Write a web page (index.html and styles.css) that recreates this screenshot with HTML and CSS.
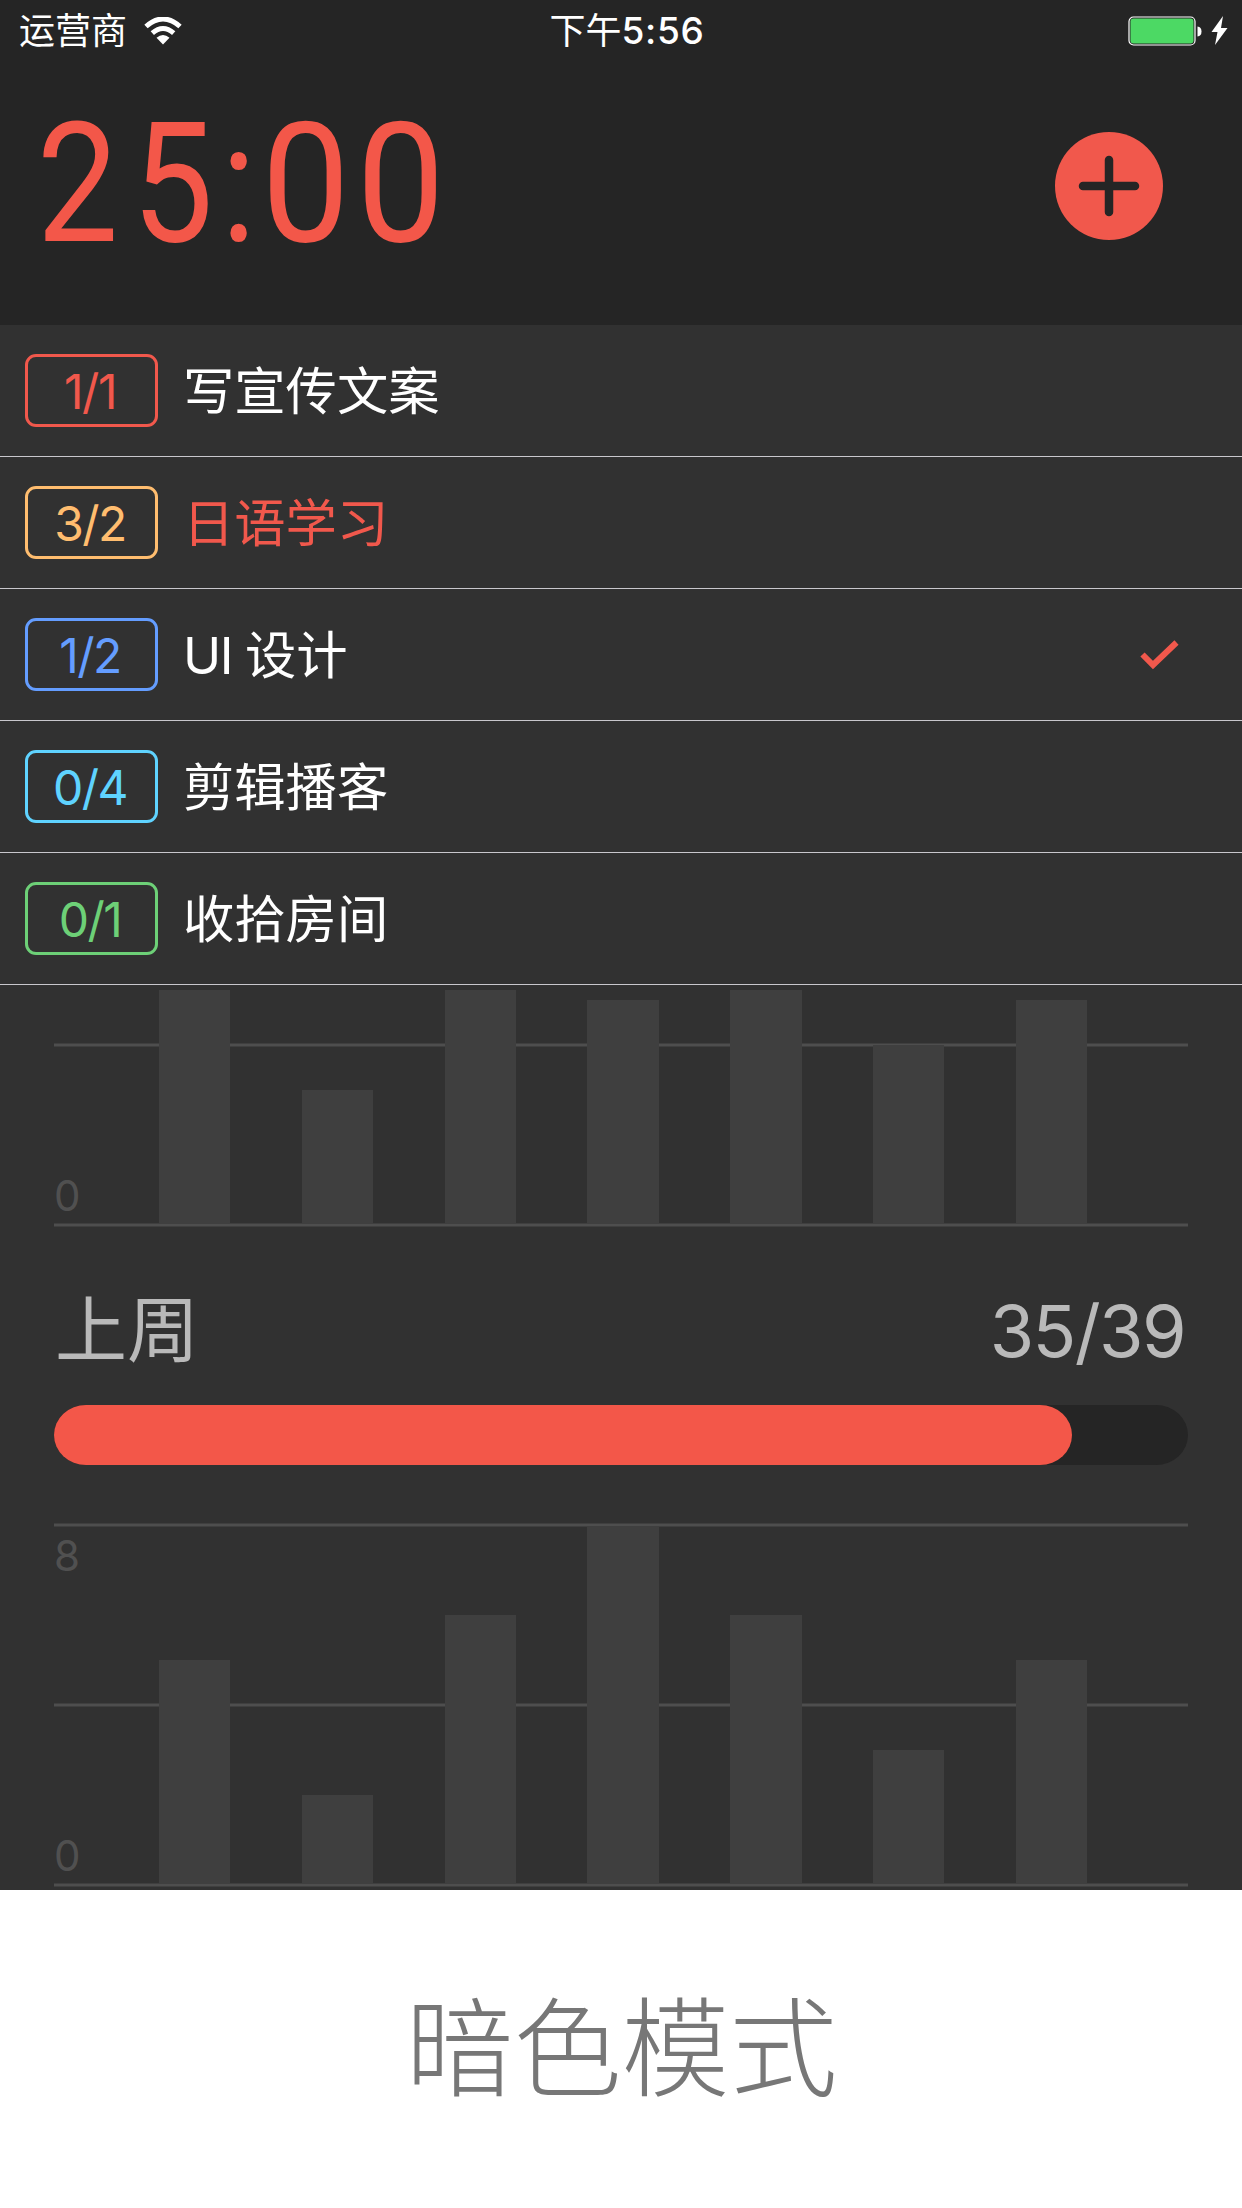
FILE: index.html
```html
<!DOCTYPE html>
<html lang="zh-CN">
<head>
<meta charset="utf-8">
<title>25:00</title>
<link rel="stylesheet" href="styles.css">
</head>
<body>
<div class="phone">
  <div class="status">
    <div class="status-left">
      <span>运营商</span>
      <svg class="wifi" width="38" height="28" viewBox="0 0 38 28" fill="none" stroke="#fff" stroke-width="5"><path d="M2 9.5Q19-5.5 36 9.5M8.3 16.2Q19 6.8 29.700 16.200"/><path d="M12.500 20.800Q19 15 25.500 20.800L19 27.500Z" fill="#fff" stroke="none"/></svg>
    </div>
    <div class="status-time">下午<b>5:56</b></div>
    <div class="status-right">
      <svg width="104" height="30" viewBox="0 0 104 30"><rect x="1" y="1" width="66" height="28" rx="4.500" fill="#252525" stroke="#fff" stroke-width="1.200"/><rect x="2.500" y="2.500" width="63" height="25" rx="3" fill="#4cd964"/><path d="M69.500 10.500q4 .5 4 5t-4 5z" fill="#fff"/><path d="M95 0 83.500 16h6L87 29 99.500 12h-6.500z" fill="#fff"/></svg>
    </div>
  </div>
  <header class="timer">
    <div class="clock"><span>2</span><span>5</span><span class="colon">:</span><span class="zero">0</span><span class="zero">0</span></div>
    <svg class="add" width="108" height="108" viewBox="0 0 108 108"><circle cx="54" cy="54" r="54" fill="#f1584c"/><path d="M54 28v52M28 54h52" stroke="#252525" stroke-width="8.500" stroke-linecap="round"/></svg>
  </header>
  <ul class="tasks">
    <li class="task red"><span class="count">1/1</span><span class="name">写宣传文案</span></li>
    <li class="task orange active"><span class="count">3/2</span><span class="name">日语学习</span></li>
    <li class="task blue"><span class="count">1/2</span><span class="name"><span class="latin">UI </span>设计</span><svg class="check" width="40" height="32" viewBox="0 0 40 32" fill="none" stroke="#f1584c" stroke-width="6"><path d="M2.500 15.500 13 26 36.500 3.500"/></svg></li>
    <li class="task cyan"><span class="count">0/4</span><span class="name">剪辑播客</span></li>
    <li class="task green"><span class="count">0/1</span><span class="name">收拾房间</span></li>
  </ul>
  <section class="stats">
    <div class="chart clipped">
      <div class="grid"><i></i><i class="edge"></i></div>
      <div class="bars"><i style="height:235px"></i><i style="height:135px"></i><i style="height:235px"></i><i style="height:225px"></i><i style="height:235px"></i><i style="height:180px"></i><i style="height:225px"></i></div>
      <span class="axis min">0</span>
    </div>
    <div class="week"><span class="week-name">上周</span><span class="week-count">35/39</span></div>
    <div class="progress"><div class="fill" style="width:1018px"></div></div>
    <div class="chart full">
      <div class="grid"><i class="edge"></i><i></i><i class="edge"></i></div>
      <div class="bars"><i style="height:225px"></i><i style="height:90px"></i><i style="height:270px"></i><i style="height:360px"></i><i style="height:270px"></i><i style="height:135px"></i><i style="height:225px"></i></div>
      <span class="axis max">8</span>
      <span class="axis min">0</span>
    </div>
  </section>
  <footer class="caption">暗色模式</footer>
</div>
</body>
</html>
```
FILE: styles.css
```css
* { box-sizing: border-box; }
body {
  margin: 0;
  background: #fff;
  font-family: Inter, "Noto Sans CJK SC", sans-serif;
}
svg { display: block; flex: none; }
.phone { width: 1242px; height: 2208px; display: flex; flex-direction: column; overflow: hidden; }

.status {
  height: 60px;
  display: grid;
  grid-template-columns: 1fr auto 1fr;
  align-items: center;
  padding-top: 1px;
  background: #252525;
  color: #fff;
  font-size: 36px;
  line-height: 60px;
}
.status-left { display: flex; align-items: center; gap: 17px; padding-left: 19px; }
.status-time { padding-left: 12px; }
.status-time b { font-size: 37px; font-weight: 500; letter-spacing: .7px; }
.status-right { display: flex; justify-content: flex-end; padding: 0 10px 0 0; }

.timer {
  height: 265px;
  display: flex;
  justify-content: space-between;
  align-items: flex-start;
  padding: 0 79.500px 0 30px;
  background: #252525;
}
.clock {
  display: flex;
  color: #f35749;
  font: 400 167px/200px Roboto, sans-serif;
  padding-top: 24px;
}
.clock span { width: 95px; display: flex; justify-content: center; transform: scaleX(.87); }
.clock .colon { width: 37px; }
.clock .zero { transform: translateX(1px) scaleX(.94); }
.add { margin-top: 71.500px; }

.tasks { margin: 0; padding: 0; list-style: none; background: #313131; }
.task {
  height: 132px;
  display: flex;
  align-items: center;
  padding: 0 62px 0 25px;
  border-bottom: 1px solid #c8c7cc;
}
.count {
  width: 133px;
  height: 73px;
  flex: none;
  padding-right: 3px;
  border: 3px solid;
  border-radius: 11px;
  font-size: 48px;
  line-height: 69px;
  letter-spacing: -1.500px;
  text-align: center;
}
.name { margin-left: 25px; padding-top: 0; flex: 1; color: #fff; font-size: 51.300px; line-height: 76px; }
.latin { letter-spacing: -1.500px; }
.red .count, .active .name { color: #f1584c; }
.orange .count { color: #ffbd6f; }
.blue .count { color: #649dff; }
.cyan .count { color: #5fd3ff; }
.green .count { color: #6dd077; }

.stats { height: 905px; padding: 5px 54px 0; background: #313131; overflow: hidden; }
.chart { position: relative; }
.clipped { height: 237px; }
.full { height: 364px; margin-top: 58px; }
.grid { position: absolute; inset: 0; display: flex; flex-direction: column; justify-content: space-between; }
.clipped .grid { top: 53px; }
.grid i {
  height: 4px;
  border: solid #3f3f3f;
  border-width: 1px 0;
  background: #4e4e4e;
}
.grid .edge { position: relative; z-index: 2; }
.bars {
  position: absolute;
  inset: 0 0 2px 105px;
  display: flex;
  align-items: flex-end;
  gap: 71.400px;
}
.bars i { width: 71.400px; background: #3f3f3f; }
.axis { position: absolute; left: 0; color: #505050; font-size: 42px; line-height: 50px; }
.axis.min { bottom: 6px; }
.axis.max { top: 8px; }
.week {
  display: flex;
  justify-content: space-between;
  height: 178px;
  color: #b9b9b9;
  font-size: 72px;
  line-height: 178px;
}
.week-name { padding: 14px 0 0 1px; }
.week-count { padding: 15px 3px 0 0; letter-spacing: -1.600px; }
.progress { height: 60px; border-radius: 32px / 30px; background: #252525; }
.fill { height: 60px; border-radius: 32px / 30px; background: #f35749; }

.caption {
  flex: 1;
  padding-left: 1px;
  color: #777;
  font-size: 108px;
  font-weight: 300;
  line-height: 318px;
  text-align: center;
}
```
